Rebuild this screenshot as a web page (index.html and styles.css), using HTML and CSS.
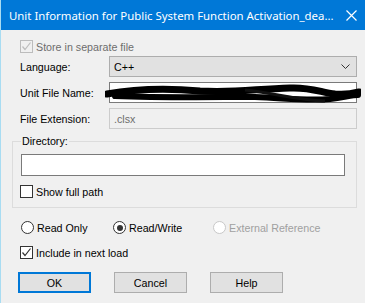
FILE: index.html
```html
<!DOCTYPE html>
<html lang="en">
<head>
    <meta charset="UTF-8">
    <title>Unit Information</title>
    <link rel="stylesheet" href="styles.css">
</head>
<body>

    <div class="window">
        <!-- Title bar -->
        <div class="titlebar">
            <span class="title">Unit Information for Public System Function Activation_dea...</span>
            <svg class="close" width="11" height="11" viewBox="0 0 11 11">
                <path d="M0.5 0.5 L10.5 10.5 M10.5 0.5 L0.5 10.5" stroke="#fff" stroke-width="1.2"/>
            </svg>
        </div>

        <div class="content">
            <label class="check-row disabled">
                <span class="box checked"></span>
                Store in separate file
            </label>

            <div class="form-grid">
                <span class="label">Language:</span>
                <div class="combo">
                    <span>C++</span>
                    <svg width="9" height="5" viewBox="0 0 9 5">
                        <path d="M0.5 0.5 L4.5 4.5 L8.5 0.5" fill="none" stroke="#333" stroke-width="1"/>
                    </svg>
                </div>

                <span class="label">Unit File Name:</span>
                <div class="field name-field">
                    <svg class="scribble" width="256" height="22" viewBox="0 0 256 22">
                        <path d="M2 11 C30 6 60 5 95 8 C130 10 150 6 185 5 C205 4 215 9 230 11 C240 12 250 10 254 9"
                              fill="none" stroke="#000" stroke-width="7" stroke-linecap="round"/>
                        <path d="M10 13 C60 15 110 14 150 14 C180 15 200 18 225 16 C240 14 248 12 253 12"
                              fill="none" stroke="#000" stroke-width="6" stroke-linecap="round"/>
                        <path d="M140 7 C170 10 190 17 220 18" fill="none" stroke="#111" stroke-width="3"/>
                    </svg>
                </div>

                <span class="label">File Extension:</span>
                <div class="field disabled-field">.clsx</div>
            </div>

            <!-- Directory group -->
            <div class="group">
                <span class="group-title">Directory:</span>
                <div class="field dir-field"></div>
                <label class="check-row">
                    <span class="box"></span>
                    Show full path
                </label>
            </div>

            <div class="radio-row">
                <label class="radio"><span class="dot"></span>Read Only</label>
                <label class="radio"><span class="dot selected"></span>Read/Write</label>
                <label class="radio disabled"><span class="dot"></span>External Reference</label>
            </div>

            <label class="check-row include">
                <span class="box checked"></span>
                Include in next load
            </label>

            <div class="buttons">
                <button class="default">OK</button>
                <button>Cancel</button>
                <button>Help</button>
            </div>
        </div>
    </div>

</body>
</html>
```

FILE: styles.css
```css
body {
    margin: 0;
    font-family: "Liberation Sans", Arial, sans-serif;
    font-size: 10.7px;
    color: #000;
}
.window {
    width: 364px;
    height: 303px;
    background-color: #f0f0f0;
    border-left: 1px solid #a8dcf2;
    overflow: hidden;
}
.titlebar {
    height: 30px;
    background-color: #0078d7;
    color: #fff;
    display: flex;
    align-items: center;
    padding: 0 8px 0 8px;
}
.title {
    font-family: "Noto Sans", sans-serif;
    font-size: 11.4px;
    white-space: nowrap;
}
.close {
    margin-left: auto;
    flex-shrink: 0;
}
.content {
    padding: 10px 8px 0 11px;
}
.check-row {
    display: flex;
    align-items: center;
    gap: 3px;
    height: 13px;
    margin-left: 8px;
}
.check-row.disabled {
    color: #6d6d6d;
}
.box {
    width: 11px;
    height: 11px;
    border: 1px solid #333;
    background-color: #fff;
}
.box.checked {
    background-image: url("data:image/svg+xml,%3Csvg xmlns='http://www.w3.org/2000/svg' width='11' height='11'%3E%3Cpath d='M1.5 5.5 L4 8.5 L9.5 1.5' fill='none' stroke='%23333' stroke-width='1.2'/%3E%3C/svg%3E");
}
.disabled .box {
    border-color: #bcbcbc;
    background-color: #f0f0f0;
    background-image: url("data:image/svg+xml,%3Csvg xmlns='http://www.w3.org/2000/svg' width='11' height='11'%3E%3Cpath d='M1.5 5.5 L4 8.5 L9.5 1.5' fill='none' stroke='%23bcbcbc' stroke-width='1.2'/%3E%3C/svg%3E");
}
.form-grid {
    display: grid;
    grid-template-columns: 89px 1fr;
    grid-auto-rows: 21px;
    row-gap: 5px;
    margin-top: 3px;
    margin-left: 8px;
}
.label {
    display: flex;
    align-items: center;
}
.combo {
    display: flex;
    align-items: center;
    justify-content: space-between;
    background-color: #e1e1e1;
    border: 1px solid #adadad;
    padding: 0 6px 0 4px;
}
.field {
    background-color: #fff;
    border: 1px solid #7a7a7a;
    display: flex;
    align-items: center;
    padding: 0 4px;
}
.name-field {
    position: relative;
}
.scribble {
    position: absolute;
    left: -5px;
    top: 0;
}
.disabled-field {
    background-color: #f0f0f0;
    border-color: #cccccc;
    color: #6d6d6d;
}
.group {
    margin-top: 12px;
    border: 1px solid #dcdcdc;
    padding: 0 11px 9px 8px;
}
.group-title {
    display: block;
    width: fit-content;
    margin-top: -7px;
    padding: 0 1px;
    line-height: 13px;
    background-color: #f0f0f0;
}
.dir-field {
    height: 20px;
    margin-top: 6px;
}
.group .check-row {
    margin: 9px 0 0 -1px;
}
.radio-row {
    display: flex;
    margin: 13px 0 0 9px;
    height: 13px;
}
.radio {
    display: flex;
    align-items: center;
    gap: 3px;
}
.radio:nth-child(1) {
    width: 92px;
}
.radio:nth-child(2) {
    width: 100px;
}
.radio.disabled {
    color: #a0a0a0;
}
.dot {
    width: 11px;
    height: 11px;
    border: 1px solid #333;
    border-radius: 50%;
    background-color: #fff;
    display: flex;
    align-items: center;
    justify-content: center;
}
.dot.selected::after {
    content: "";
    width: 6px;
    height: 6px;
    border-radius: 50%;
    background-color: #333;
}
.radio.disabled .dot {
    border-color: #c8c8c8;
}
.include {
    margin-top: 12px;
}
.buttons {
    display: flex;
    gap: 23px;
    margin: 13px 0 0 6px;
}
button {
    width: 73px;
    height: 21px;
    background-color: #e1e1e1;
    border: 1px solid #adadad;
    font-family: "Liberation Sans", Arial, sans-serif;
    font-size: 10.7px;
    color: #000;
    padding: 0;
}
button.default {
    border: 2px solid #0078d7;
}
```
